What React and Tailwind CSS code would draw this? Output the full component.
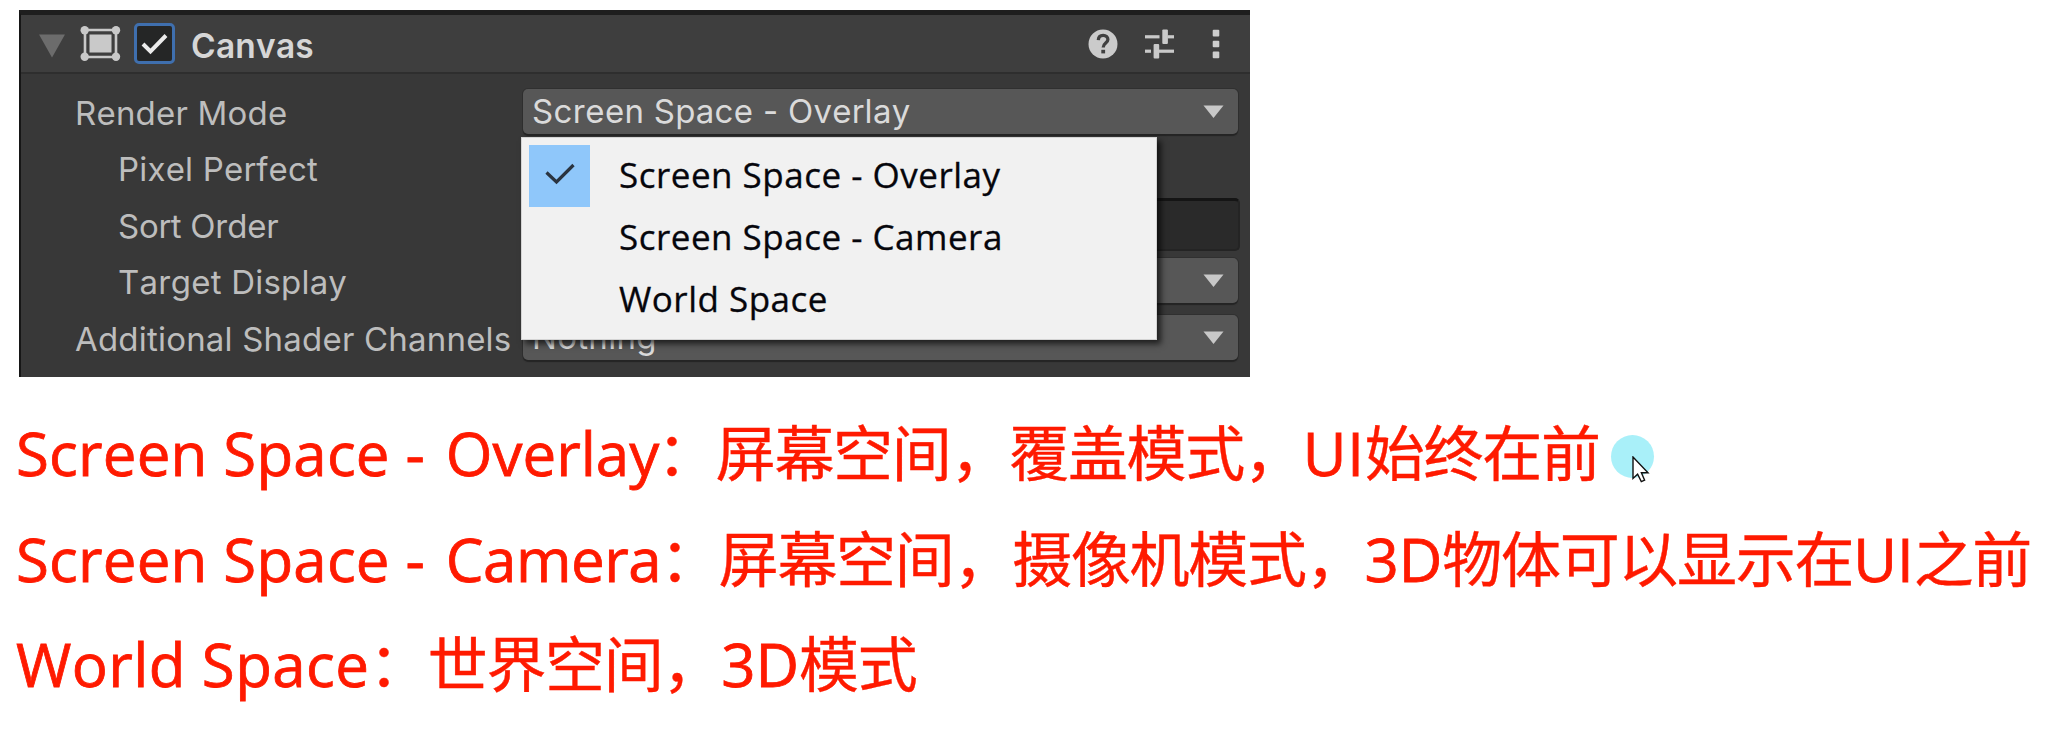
const FIELD =
  'relative flex h-[45px] w-[715px] items-center rounded-[5px] bg-[#575757] pl-[9px] pr-[14px] shadow-[0_2px_1px_#242424,0_0_0_1px_#303030] text-[#dadada]';

function Arrow() {
  return (
    <svg className="ml-auto h-[13px] w-[21px] shrink-0" viewBox="0 0 21 13" fill="#c8c8c8">
      <path d="M0.5 0.5H20.5L10.5 13Z" />
    </svg>
  );
}

function Row({ label, indent, tight, children }) {
  return (
    <div className="flex h-[56.4px] items-center">
      <div
        className={`w-[448px] shrink-0 pt-[4px] whitespace-nowrap text-[#bdbdbd] ${indent ? 'pl-[43px]' : ''} ${tight ? 'tracking-[-0.25px]' : 'tracking-[0.2px]'}`}
      >
        {label}
      </div>
      {children}
    </div>
  );
}

function Menu() {
  return (
    <div className="absolute left-[-2px] top-[48px] z-10 flex h-[203px] w-[636px] flex-col border border-[#d4d4d4] bg-[#f1f1f1] pt-[7px] font-['Open_Sans',sans-serif] text-[35px] tracking-[0.5px] text-[#06060c] shadow-[4px_4px_6px_rgba(0,0,0,0.65)] [-webkit-text-stroke:0.3px_#06060c]">
      {['Screen Space - Overlay', 'Screen Space - Camera', 'World Space'].map((name, i) => (
        <div key={name} className="flex h-[62.3px] items-center pl-[7px]">
          <div className={`flex h-[62px] w-[61px] items-center justify-center ${i === 0 ? 'bg-[#8fc7fa]' : ''}`}>
            {i === 0 && (
              <svg className="mt-[-4px] h-[22px] w-[30px]" viewBox="0 0 30 22" fill="none" stroke="#2a3440" strokeWidth="3.2">
                <path d="M1.5 9.5L11.5 19L28.5 2" />
              </svg>
            )}
          </div>
          <span className="mt-[-4px] ml-[29px] whitespace-nowrap leading-none">{name}</span>
        </div>
      ))}
    </div>
  );
}

function CanvasIcon() {
  return (
    <svg className="h-[36px] w-[41px]" viewBox="0 0 41 36" fill="none">
      <path d="M5 4H36V31H5Z" stroke="#c9c9c9" strokeWidth="2.6" />
      <rect x="9.5" y="8.5" width="22" height="18" fill="#c9c9c9" />
      <g fill="#c9c9c9">
        <circle cx="4.7" cy="4.3" r="4.2" />
        <circle cx="36" cy="4.3" r="4.2" />
        <circle cx="4.7" cy="30.7" r="4.2" />
        <circle cx="36" cy="30.7" r="4.2" />
      </g>
    </svg>
  );
}

function Header() {
  return (
    <div className="flex h-[59px] items-center border-b-2 border-[#2e2e2e] bg-[#3e3e3e] pl-[18px]">
      <svg className="mt-[4px] h-[24px] w-[26px]" viewBox="0 0 26 24" fill="#6c6c6c">
        <path d="M0 0.5H26L13 23.5Z" />
      </svg>
      <div className="ml-[15px]">
        <CanvasIcon />
      </div>
      <div className="ml-[13px] flex h-[41px] w-[41px] items-center justify-center rounded-[5px] border-[3.5px] border-[#3f6fae] bg-[#252626]">
        <svg className="h-[22px] w-[27px]" viewBox="0 0 27 22" fill="none" stroke="#ececec" strokeWidth="4">
          <path d="M2 11L9.5 18.5L25 2.5" />
        </svg>
      </div>
      <span className="ml-[16px] pt-[6px] text-[33.5px] font-semibold leading-none tracking-[0.2px] text-[#d6d6d6]">
        Canvas
      </span>
      <svg className="ml-auto mr-[27px] h-[30px] w-[30px]" viewBox="0 0 30 30" fill="none">
        <circle cx="15" cy="15" r="14.5" fill="#cbcbcb" />
        <path d="M10.3 11.2C10.5 8.2 12.4 6.4 15.1 6.4C17.9 6.4 19.9 8.1 19.9 10.6C19.9 14 15.2 14.2 15.2 18.4" stroke="#404040" strokeWidth="3.3" />
        <rect x="13.3" y="20.8" width="3.8" height="3.6" fill="#404040" />
      </svg>
      <svg className="mr-[38px] h-[30px] w-[29px]" viewBox="0 0 29 30" fill="#c9c9c9">
        <rect x="0" y="6.2" width="14.5" height="3.2" />
        <rect x="17.3" y="0.5" width="5.6" height="14.5" rx="1" />
        <rect x="22.5" y="6.2" width="6.5" height="3.2" />
        <rect x="0" y="20.6" width="6" height="3.2" />
        <rect x="8.6" y="15" width="5.6" height="14.5" rx="1" />
        <rect x="14" y="20.6" width="15" height="3.2" />
      </svg>
      <svg className="mr-[30px] h-[30px] w-[8px]" viewBox="0 0 8 30" fill="#cdcdcd">
        <rect x="0.7" y="0.8" width="6.6" height="6.6" rx="1" />
        <rect x="0.7" y="11.7" width="6.6" height="6.6" rx="1" />
        <rect x="0.7" y="22.6" width="6.6" height="6.6" rx="1" />
      </svg>
    </div>
  );
}

function Inspector() {
  return (
    <div className="ml-[19px] h-[367px] w-[1231px] border-l-2 border-t-[5px] border-l-[#161616] border-t-[#1e1e1e] bg-[#383838] font-['Inter',sans-serif] text-[33px] leading-none">
      <Header />
      <div className="pl-[54px] pt-[9.3px]">
        <Row label="Render Mode">
          <div className={FIELD}>
            <span className="whitespace-nowrap tracking-[0.3px]">Screen Space - Overlay</span>
            <Arrow />
            <Menu />
          </div>
        </Row>
        <Row label="Pixel Perfect" indent />
        <Row label="Sort Order" indent tight>
          <div className="h-[53px] w-[717px] rounded-[5px] border-2 border-t-3 border-[#242424] border-t-[#151515] bg-[#2a2a2a]" />
        </Row>
        <Row label="Target Display" indent>
          <div className={FIELD}>
            <Arrow />
          </div>
        </Row>
        <Row label="Additional Shader Channels">
          <div className={FIELD}>
            <span className="tracking-[0.3px]">Nothing</span>
            <Arrow />
          </div>
        </Row>
      </div>
    </div>
  );
}

const LATIN = "shrink-0 font-['Open_Sans',sans-serif] [-webkit-text-stroke:0.8px_#ff1a00]";
const HAN = "font-['Noto_Sans_CJK_SC',sans-serif] tracking-[-1.3px] [-webkit-text-stroke:0.4px_#ff1a00]";

function Pointer() {
  return (
    <div className="absolute left-[1611px] top-[38px] h-[43px] w-[43px] rounded-full bg-[#a9f0f9]">
      <svg className="absolute left-[21px] top-[21px] h-[27px] w-[18px]" viewBox="0 0 18 27" fill="#fff" stroke="#111" strokeWidth="1.4">
        <path d="M1 1V22.5L5.6 18.2L9.3 25.6L12.6 24.1L9.4 16.8H16Z" />
      </svg>
    </div>
  );
}

export default function App() {
  return (
    <div className="h-[734px] w-[2064px] overflow-hidden bg-white pt-[10px] [font-kerning:none]">
      <Inspector />
      <div className="relative mt-[20px] whitespace-nowrap pl-[16px] text-[60px] leading-[105.6px] text-[#ff1a00]">
        <div className="flex h-[105.6px] items-baseline">
          <span className={`${LATIN} w-[641px] tracking-[0.2px]`}>
            Screen Space - <span className="ml-[5px] tracking-[0px]">Overlay</span>
          </span>
          <span className={HAN}>：屏幕空间，覆盖模式，</span>
          <span className={`${LATIN} tracking-[0.8px]`}>UI</span>
          <span className={HAN}>始终在前</span>
        </div>
        <div className="flex h-[105.6px] items-baseline">
          <span className={`${LATIN} w-[644px] tracking-[0.2px]`}>
            Screen Space - <span className="ml-[5px] tracking-[-0.5px]">Camera</span>
          </span>
          <span className={HAN}>：屏幕空间，摄像机模式，</span>
          <span className={LATIN}>3D</span>
          <span className={HAN}>物体可以显示在</span>
          <span className={LATIN}>UI</span>
          <span className={HAN}>之前</span>
        </div>
        <div className="flex h-[105.6px] items-baseline">
          <span className={`${LATIN} w-[353px] tracking-[0.4px]`}>World Space</span>
          <span className={HAN}>：世界空间，</span>
          <span className={LATIN}>3D</span>
          <span className={HAN}>模式</span>
        </div>
        <Pointer />
      </div>
    </div>
  );
}
